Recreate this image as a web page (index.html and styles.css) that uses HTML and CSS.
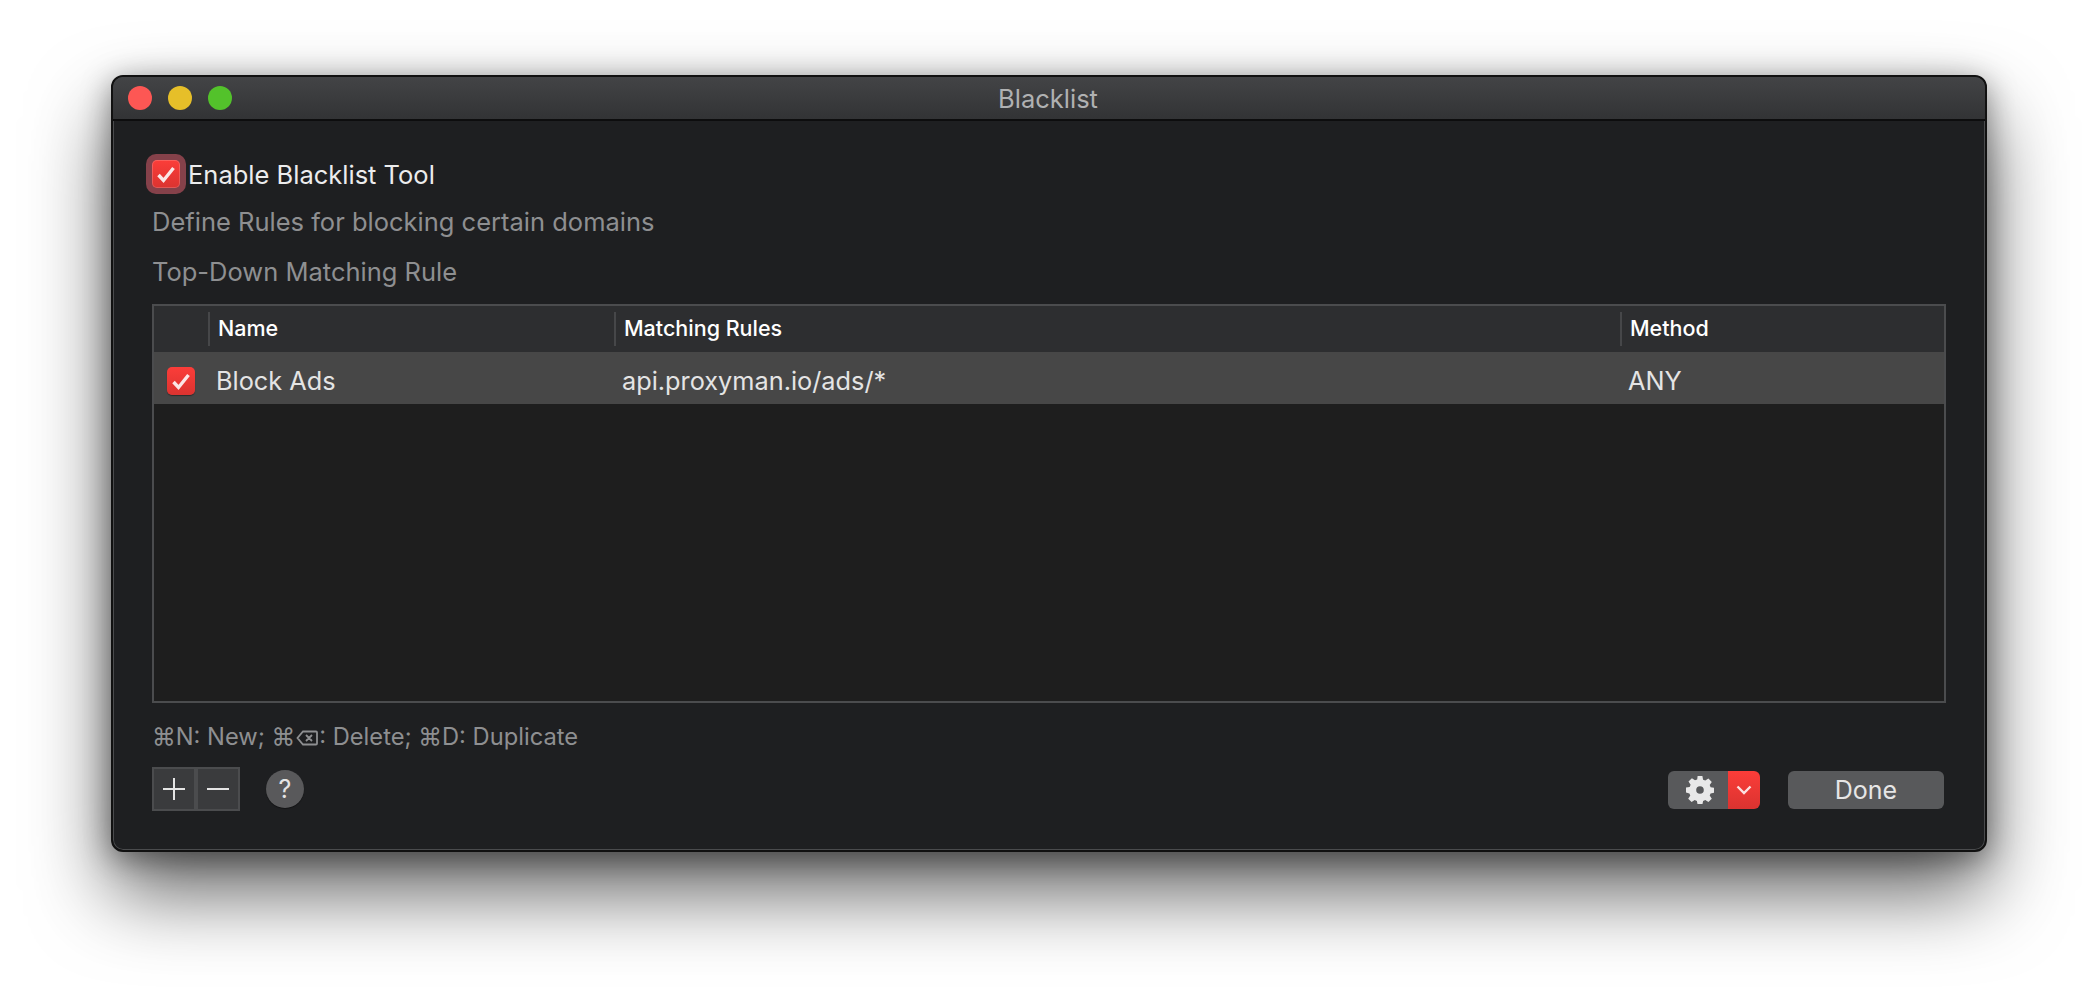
FILE: index.html
```html
<!DOCTYPE html>
<html lang="en">
<head>
    <meta charset="utf-8">
    <title>Blacklist</title>
    <link rel="stylesheet" href="styles.css">
</head>
<body>
<div class="window">
    <div class="titlebar">
        <div class="lights">
            <span class="light red"></span>
            <span class="light yellow"></span>
            <span class="light green"></span>
        </div>
        <div class="title">Blacklist</div>
    </div>
    <div class="content">
        <div class="enable">
            <span class="focus-ring">
                <span class="check">
                    <svg viewBox="0 0 28 28" width="28" height="28"><path d="M6.500 15l5 5.500L21.500 8" fill="none" stroke="#fbe6e6" stroke-width="3.400" /></svg>
                </span>
            </span>
            <span class="enable-label">Enable Blacklist Tool</span>
        </div>
        <div class="note define">Define Rules for blocking certain domains</div>
        <div class="note topdown">Top-Down Matching Rule</div>

        <div class="table">
            <div class="thead">
                <div class="col col-check"></div>
                <div class="col col-name"><span class="th">Name</span></div>
                <div class="col col-rule"><span class="th">Matching Rules</span></div>
                <div class="col col-method"><span class="th">Method</span></div>
            </div>
            <div class="row">
                <div class="col col-check">
                    <span class="check">
                        <svg viewBox="0 0 28 28" width="28" height="28"><path d="M6.500 15l5 5.500L21.500 8" fill="none" stroke="#fbe6e6" stroke-width="3.400" /></svg>
                    </span>
                </div>
                <div class="col col-name">Block Ads</div>
                <div class="col col-rule">api.proxyman.io/ads/*</div>
                <div class="col col-method">ANY</div>
            </div>
        </div>

        <div class="shortcuts">⌘N: New; ⌘<svg class="del-key" viewBox="0 0 22 16" width="22" height="16"><path d="M7 1.500h13a1 1 0 0 1 1 1v11a1 1 0 0 1-1 1H7L1.500 8zM10 5l6 6M16 5l-6 6" fill="none" stroke="#8e8f91" stroke-width="1.800" /></svg>: Delete; ⌘D: Duplicate</div>

        <div class="footer">
            <div class="plusminus">
                <button class="pm"><svg viewBox="0 0 22 22" width="22" height="22"><path d="M11 0v22M0 11h22" stroke="#e4e4e4" stroke-width="2" /></svg></button>
                <button class="pm"><svg viewBox="0 0 22 22" width="22" height="22"><path d="M0 11h22" stroke="#e4e4e4" stroke-width="2" /></svg></button>
            </div>
            <button class="help">?</button>
            <div class="spacer"></div>
            <div class="gear-group">
                <button class="gear">
                    <svg viewBox="0 0 28 28" width="28" height="28">
                        <path fill="#e8e8e8" fill-rule="evenodd" d="M11.600 0h4.800l.7 3.700 2.200.9 3.100-2.100 3.400 3.400-2.100 3.100.9 2.200 3.700.7v4.800l-3.700.7-.9 2.200 2.100 3.100-3.400 3.400-3.100-2.100-2.200.9-.7 3.700h-4.800l-.7-3.700-2.200-.9-3.100 2.100-3.400-3.400 2.100-3.100-.9-2.200L0 16.400v-4.800l3.700-.7.9-2.200-2.100-3.100 3.400-3.400 3.100 2.100 2.200-.9zM14 10.200a3.800 3.800 0 1 0 0 7.600 3.800 3.800 0 0 0 0-7.600z" />
                    </svg>
                </button>
                <button class="gear-arrow"><svg viewBox="0 0 16 10" width="16" height="10"><path d="M1.500 1.500L8 8l6.500-6.500" fill="none" stroke="#fbe1e1" stroke-width="2.400" /></svg></button>
            </div>
            <button class="done">Done</button>
        </div>
    </div>
</div>
</body>
</html>
```
FILE: styles.css
```css
* { box-sizing: border-box; }
html, body { height: 100%; }
body { margin: 0; padding: 75px 0 0 111px; background: #fff; font-family: Inter, "Liberation Sans", sans-serif; overflow: hidden; }
button { font-family: inherit; border: none; padding: 0; margin: 0; }

.window { width: 1876px; height: 777px; background: #1e1f21; border: 2px solid #111; border-radius: 12px; box-shadow: inset 0 0 0 1px #4a4b4d, 0 40px 80px rgba(0,0,0,0.62), 0 6px 30px rgba(0,0,0,0.4); overflow: hidden; }

.titlebar { height: 44px; position: relative; background: linear-gradient(#434446, #323335); border-bottom: 2px solid #0d0d0e; display: flex; align-items: center; justify-content: center; }
.lights { position: absolute; left: 15px; top: 9px; display: flex; gap: 16px; }
.light { width: 24px; height: 24px; border-radius: 50%; }
.red { background: #fd5754; }
.yellow { background: #e6bf29; }
.green { background: #53c22b; }
.title { color: #b0b1b2; font-size: 25.500px; line-height: 28px; margin-top: 2px; margin-right: 2px; }

.content { padding: 33px 39px 0 39px; }

.enable { display: flex; align-items: center; height: 40px; margin-left: -6px; }
.focus-ring { width: 40px; height: 40px; background: #85414a; border-radius: 10px; display: flex; align-items: center; justify-content: center; }
.check { width: 28px; height: 28px; border-radius: 5px; background: linear-gradient(#fb3d39, #db3330); display: flex; align-items: center; justify-content: center; box-shadow: 0 1px 1px rgba(0,0,0,0.4); }
.focus-ring .check { box-shadow: inset 0 0 0 1px rgba(255,255,255,0.18); }
.enable-label { margin-left: 2px; color: #ececed; font-size: 25.500px; }

.note { color: #8e8f91; font-size: 25.500px; line-height: 28px; }
.define { margin-top: 14px; }
.topdown { margin-top: 22px; }

.table { margin-top: 18px; height: 399px; border: 2px solid #4b4c4e; background: #1e1e1e; }
.thead { display: flex; height: 46px; background: #2d2e30; color: #fff; font-size: 21.500px; font-weight: 500; }
.thead .col { display: flex; align-items: center; padding-bottom: 2px; }
.thead .col-name, .thead .col-rule, .thead .col-method { position: relative; padding-left: 10px; }
.thead .col-name::before, .thead .col-rule::before, .thead .col-method::before { content: ""; position: absolute; left: 0; top: 6px; bottom: 6px; width: 2px; background: #464749; }
.row { display: flex; align-items: center; height: 52px; padding-top: 5px; background: #474747; color: #e4e4e4; font-size: 25.300px; }
.col-check { width: 54px; display: flex; justify-content: center; }
.col-name { width: 406px; padding-left: 8px; }
.col-rule { width: 1006px; padding-left: 8px; }
.col-method { flex: 1; padding-left: 8px; }

.shortcuts { margin-top: 21px; color: #8e8f91; font-size: 23.700px; line-height: 26px; }
.del-key { margin: 0 1px; vertical-align: -1px; }

.footer { display: flex; align-items: center; margin-top: 17px; }
.plusminus { display: flex; width: 88px; height: 44px; background: #4b4c4e; padding: 2px; gap: 4px; }
.pm { flex: 1; background: #3a3b3d; display: flex; align-items: center; justify-content: center; }
.help { margin-left: 26px; width: 38px; height: 38px; border-radius: 50%; background: #59595b; color: #e4e4e4; font-size: 25px; box-shadow: 0 1px 1px rgba(0,0,0,0.4); }
.spacer { flex: 1; }
.gear-group { display: flex; height: 38px; width: 92px; margin-top: 2px; border-radius: 6px; overflow: hidden; }
.gear { width: 60px; padding-left: 3px; background: #58595b; display: flex; align-items: center; justify-content: center; }
.gear-arrow { flex: 1; background: linear-gradient(#fb3d39, #db3330); display: flex; align-items: center; justify-content: center; }
.done { margin: 2px 2px 0 28px; width: 156px; height: 38px; border-radius: 6px; background: #58595b; color: #e6e6e6; font-size: 25px; }
```
